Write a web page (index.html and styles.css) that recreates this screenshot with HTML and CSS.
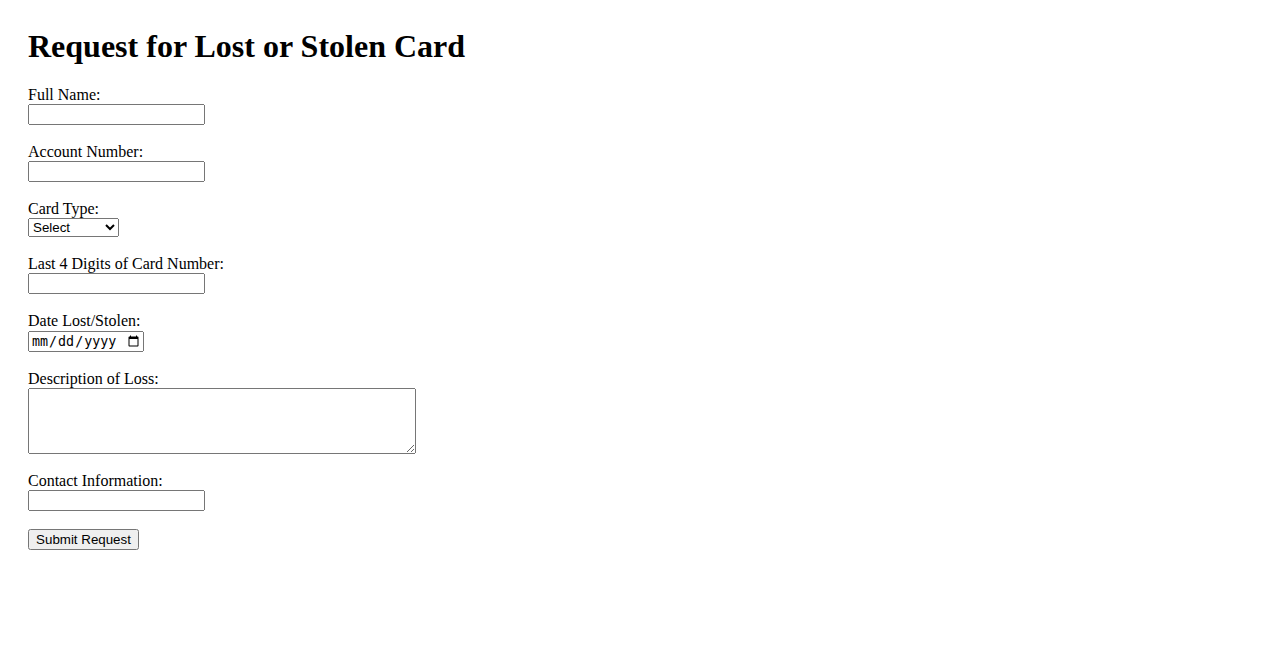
FILE: index.html
```html
<!DOCTYPE html>
<html>
<head>
<meta charset="utf-8">
<title>Request for Lost or Stolen Card</title>
<link rel="stylesheet" href="styles.css">
</head>
<body>
<div class="page">
<h1 class="title">Request for Lost or Stolen Card</h1>
<form class="form">
<label for="name">Full Name:</label><br>
<input type="text" id="name" class="field"><br><br>
<label for="acct">Account Number:</label><br>
<input type="text" id="acct" class="field"><br><br>
<label for="type">Card Type:</label><br>
<select id="type" class="select">
<option>Select</option>
<option>Credit Card</option>
<option>Debit Card</option>
</select><br><br>
<label for="last4">Last 4 Digits of Card Number:</label><br>
<input type="text" id="last4" class="field"><br><br>
<label for="date">Date Lost/Stolen:</label><br>
<input type="date" id="date" class="date"><br><br>
<label for="desc">Description of Loss:</label><br>
<textarea id="desc" class="desc" rows="4" cols="50"></textarea><br><br>
<label for="contact">Contact Information:</label><br>
<input type="text" id="contact" class="field"><br><br>
<button type="button" class="submit">Submit Request</button>
</form>
</div>
</body>
</html>
```
FILE: styles.css
```css
body {
  margin: 8px;
  font-family: "Liberation Serif", "Times New Roman", serif;
  font-size: 16px;
  color: #000;
  background: #fff;
}
.page {
  padding: 20px;
}
.title {
  font-size: 32px;
  font-weight: bold;
  margin: 0 0 21px 0;
}
.field {
  font-family: "Liberation Sans", Arial, sans-serif;
  font-size: 13.333px;
  width: 177px;
  height: 21px;
  box-sizing: border-box;
}
.select {
  font-family: "Liberation Sans", Arial, sans-serif;
  font-size: 13.333px;
  width: 91px;
  height: 19px;
  box-sizing: border-box;
}
.date {
  font-size: 13.333px;
  width: 116px;
  height: 21px;
  margin-top: 1px;
  box-sizing: border-box;
}
.desc {
  width: 388px;
  height: 66px;
  vertical-align: top;
  box-sizing: border-box;
}
.submit {
  font-family: "Liberation Sans", Arial, sans-serif;
  font-size: 13.333px;
  height: 21px;
  width: 111px;
  box-sizing: border-box;
}
```
